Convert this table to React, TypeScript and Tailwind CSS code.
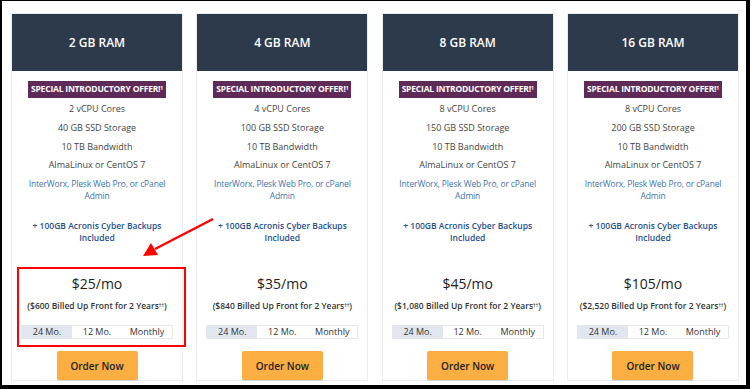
import React from 'react';

interface Plan {
  ram: string;
  cores: string;
  storage: string;
  price: string;
  billed: string;
}

const PLANS: Plan[] = [
  { ram: '2 GB RAM', cores: '2 vCPU Cores', storage: '40 GB SSD Storage', price: '$25/mo', billed: '$600' },
  { ram: '4 GB RAM', cores: '4 vCPU Cores', storage: '100 GB SSD Storage', price: '$35/mo', billed: '$840' },
  { ram: '8 GB RAM', cores: '8 vCPU Cores', storage: '150 GB SSD Storage', price: '$45/mo', billed: '$1,080' },
  { ram: '16 GB RAM', cores: '8 vCPU Cores', storage: '200 GB SSD Storage', price: '$105/mo', billed: '$2,520' },
];

function PlanCard({ plan }: { plan: Plan }) {
  return (
    <div className="flex flex-col border border-[#ececec] bg-white">
      {/* Header */}
      <div className="flex h-[57px] items-center justify-center bg-[#2d3a4b] text-[12px] font-semibold text-white">
        {plan.ram}
      </div>

      <div className="flex flex-col items-center px-[6px] pt-[9.5px] text-center text-[9px] leading-[12px] text-[#444]">
        <div className="whitespace-nowrap bg-[#5e2a57] px-[3px] py-[2.5px] text-[8.5px] font-bold leading-[12px] tracking-[-0.2px] text-white">
          SPECIAL INTRODUCTORY OFFER!<sup className="text-[5px]">1</sup>
        </div>
        <div className="mt-[5.5px]">{plan.cores}</div>
        <div className="mt-[6.8px]">{plan.storage}</div>
        <div className="mt-[6.8px]">10 TB Bandwidth</div>
        <div className="mt-[6.8px]">AlmaLinux or CentOS 7</div>
        <div className="mt-[6.5px] whitespace-nowrap text-[8.5px] leading-[11.7px] tracking-[-0.15px] text-[#3f74ad]">
          InterWorx, Plesk Web Pro, or cPanel
          <br />
          Admin
        </div>
        <div className="mt-[18.5px] whitespace-nowrap text-[8.5px] font-semibold leading-[12.4px] text-[#1f4f8c]">
          + 100GB Acronis Cyber Backups
          <br />
          Included
        </div>

        {/* Pricing */}
        <div className="mt-[28px] text-[14px] font-medium leading-[22px] text-[#222]">{plan.price}</div>
        <div className="mt-[5.5px] whitespace-nowrap text-[8.5px] font-semibold leading-[12px] text-[#333]">
          ({plan.billed} Billed Up Front for 2 Years<sup className="text-[5px]">††</sup>)
        </div>
        <div className="mt-[12.5px] grid h-[14px] w-[152px] grid-cols-3 border border-[#e4e8ee] text-[9px] leading-[12px] text-[#333]">
          <div className="bg-[#e2e7ef]">24 Mo.</div>
          <div>12 Mo.</div>
          <div>Monthly</div>
        </div>

        <button className="mt-[12.5px] h-[29px] w-[81px] rounded-[2px] bg-[#fbae42] text-[10px] font-semibold text-[#222] shadow-[0_1px_1px_rgba(0,0,0,0.12)]">
          Order Now
        </button>
      </div>
    </div>
  );
}

export default function App() {
  return (
    <div
      className="relative h-[389px] w-[750px] overflow-hidden border-b-4 border-l-2 border-r-4 border-t border-black bg-white"
      style={{ fontFamily: '"Open Sans", "Liberation Sans", sans-serif' }}
    >
      <div className="grid grid-cols-4 gap-x-[13.33px] pl-[9px] pr-[7px] pt-[12px]">
        {PLANS.map((plan) => (
          <PlanCard key={plan.ram} plan={plan} />
        ))}
      </div>

      {/* Red annotation: arrow and highlight box */}
      <svg className="pointer-events-none absolute -left-[2px] -top-[1px]" width="750" height="389" viewBox="0 0 750 389">
        <line x1="213" y1="219" x2="155" y2="249" stroke="#ff0000" strokeWidth="2.4" />
        <polygon points="143,256 151,243 158,255" fill="#ff0000" />
        <rect x="18" y="268" width="167" height="78" fill="none" stroke="#ff0000" strokeWidth="2" />
      </svg>
    </div>
  );
}
